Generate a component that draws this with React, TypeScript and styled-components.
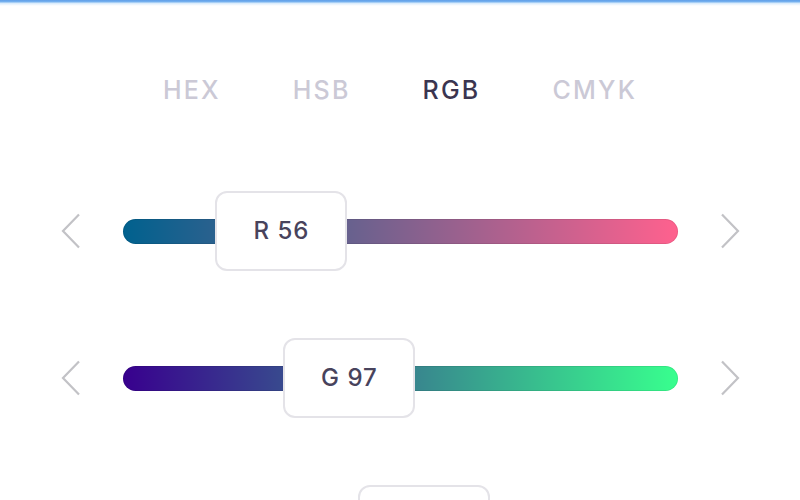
import React, { useState } from "react";
import styled, { createGlobalStyle } from "styled-components";

const GlobalStyle = createGlobalStyle`
  html, body {
    margin: 0;
    padding: 0;
    background: #ffffff;
    overflow: hidden;
  }
  body {
    font-family: "Inter", "Noto Sans", sans-serif;
  }
`;

const Page = styled.div`
  width: 800px;
  height: 500px;
  overflow: hidden;
  background: #ffffff;
  display: flex;
  flex-direction: column;
`;

const TopLine = styled.div`
  height: 6px;
  flex-shrink: 0;
  background: linear-gradient(
    to bottom,
    #5f9ee8 0px,
    #7ab4f0 2px,
    #d4e9fb 3px,
    #f4f9fe 5px,
    #ffffff 6px
  );
`;

const Tabs = styled.div`
  display: flex;
  justify-content: center;
  gap: 72px;
  margin-top: 69px;
  height: 32px;
  align-items: center;
`;

const Tab = styled.button<{ $active?: boolean }>`
  border: none;
  background: none;
  padding: 0;
  cursor: pointer;
  font-family: "Inter", "Noto Sans", sans-serif;
  font-size: 25px;
  font-weight: 500;
  letter-spacing: 2.2px;
  color: ${(p) => (p.$active ? "#3b3550" : "#cbc9d6")};
`;

const Sliders = styled.div`
  display: flex;
  flex-direction: column;
  gap: 67px;
  margin-top: 86px;
`;

const Row = styled.div`
  display: flex;
  align-items: center;
  justify-content: center;
  gap: 42px;
  height: 80px;
`;

const Arrow = styled.button`
  border: none;
  background: none;
  padding: 0;
  width: 20px;
  height: 36px;
  display: flex;
  cursor: pointer;
`;

const Track = styled.div`
  position: relative;
  width: 555px;
  height: 25px;
  border-radius: 13px;
  box-shadow: inset 0 0 0 1px rgba(0, 0, 0, 0.08);
`;

const Thumb = styled.div`
  position: absolute;
  top: 50%;
  width: 132px;
  height: 80px;
  margin-top: -40px;
  box-sizing: border-box;
  background: #ffffff;
  border: 2px solid #e4e3e8;
  border-radius: 12px;
  display: flex;
  align-items: center;
  justify-content: center;
`;

const ThumbLabel = styled.span`
  font-size: 24px;
  font-weight: 500;
  line-height: 1;
  color: #48435c;
  letter-spacing: 1px;
`;

const Chevron = ({ dir }: { dir: "left" | "right" }) => (
  <svg width="20" height="36" viewBox="0 0 20 36">
    <path
      d={dir === "left" ? "M18 1.5 L2 18 L18 34.5" : "M2 1.5 L18 18 L2 34.5"}
      fill="none"
      stroke="#c2c2c6"
      strokeWidth="2.2"
    />
  </svg>
);

const THUMB_W = 132;
const TRACK_W = 555;

type Channel = "R" | "G" | "B";

export default function App() {
  const [mode, setMode] = useState("RGB");
  const [rgb, setRgb] = useState<Record<Channel, number>>({ R: 56, G: 97, B: 142 });

  const gradient = (ch: Channel) => {
    const from = { ...rgb, [ch]: 0 };
    const to = { ...rgb, [ch]: 255 };
    return `linear-gradient(to right, rgb(${from.R},${from.G},${from.B}), rgb(${to.R},${to.G},${to.B}))`;
  };

  const step = (ch: Channel, d: number) =>
    setRgb((prev) => ({ ...prev, [ch]: Math.min(255, Math.max(0, prev[ch] + d)) }));

  return (
    <>
      <GlobalStyle />
      <Page>
        <TopLine />
        <Tabs>
          {["HEX", "HSB", "RGB", "CMYK"].map((m) => (
            <Tab key={m} $active={m === mode} onClick={() => setMode(m)}>
              {m}
            </Tab>
          ))}
        </Tabs>
        <Sliders>
          {(["R", "G", "B"] as Channel[]).map((ch) => (
            <Row key={ch}>
              <Arrow onClick={() => step(ch, -1)}>
                <Chevron dir="left" />
              </Arrow>
              <Track style={{ background: gradient(ch) }}>
                <Thumb style={{ left: (rgb[ch] / 255) * (TRACK_W - THUMB_W) }}>
                  <ThumbLabel>
                    {ch} {rgb[ch]}
                  </ThumbLabel>
                </Thumb>
              </Track>
              <Arrow onClick={() => step(ch, 1)}>
                <Chevron dir="right" />
              </Arrow>
            </Row>
          ))}
        </Sliders>
      </Page>
    </>
  );
}
